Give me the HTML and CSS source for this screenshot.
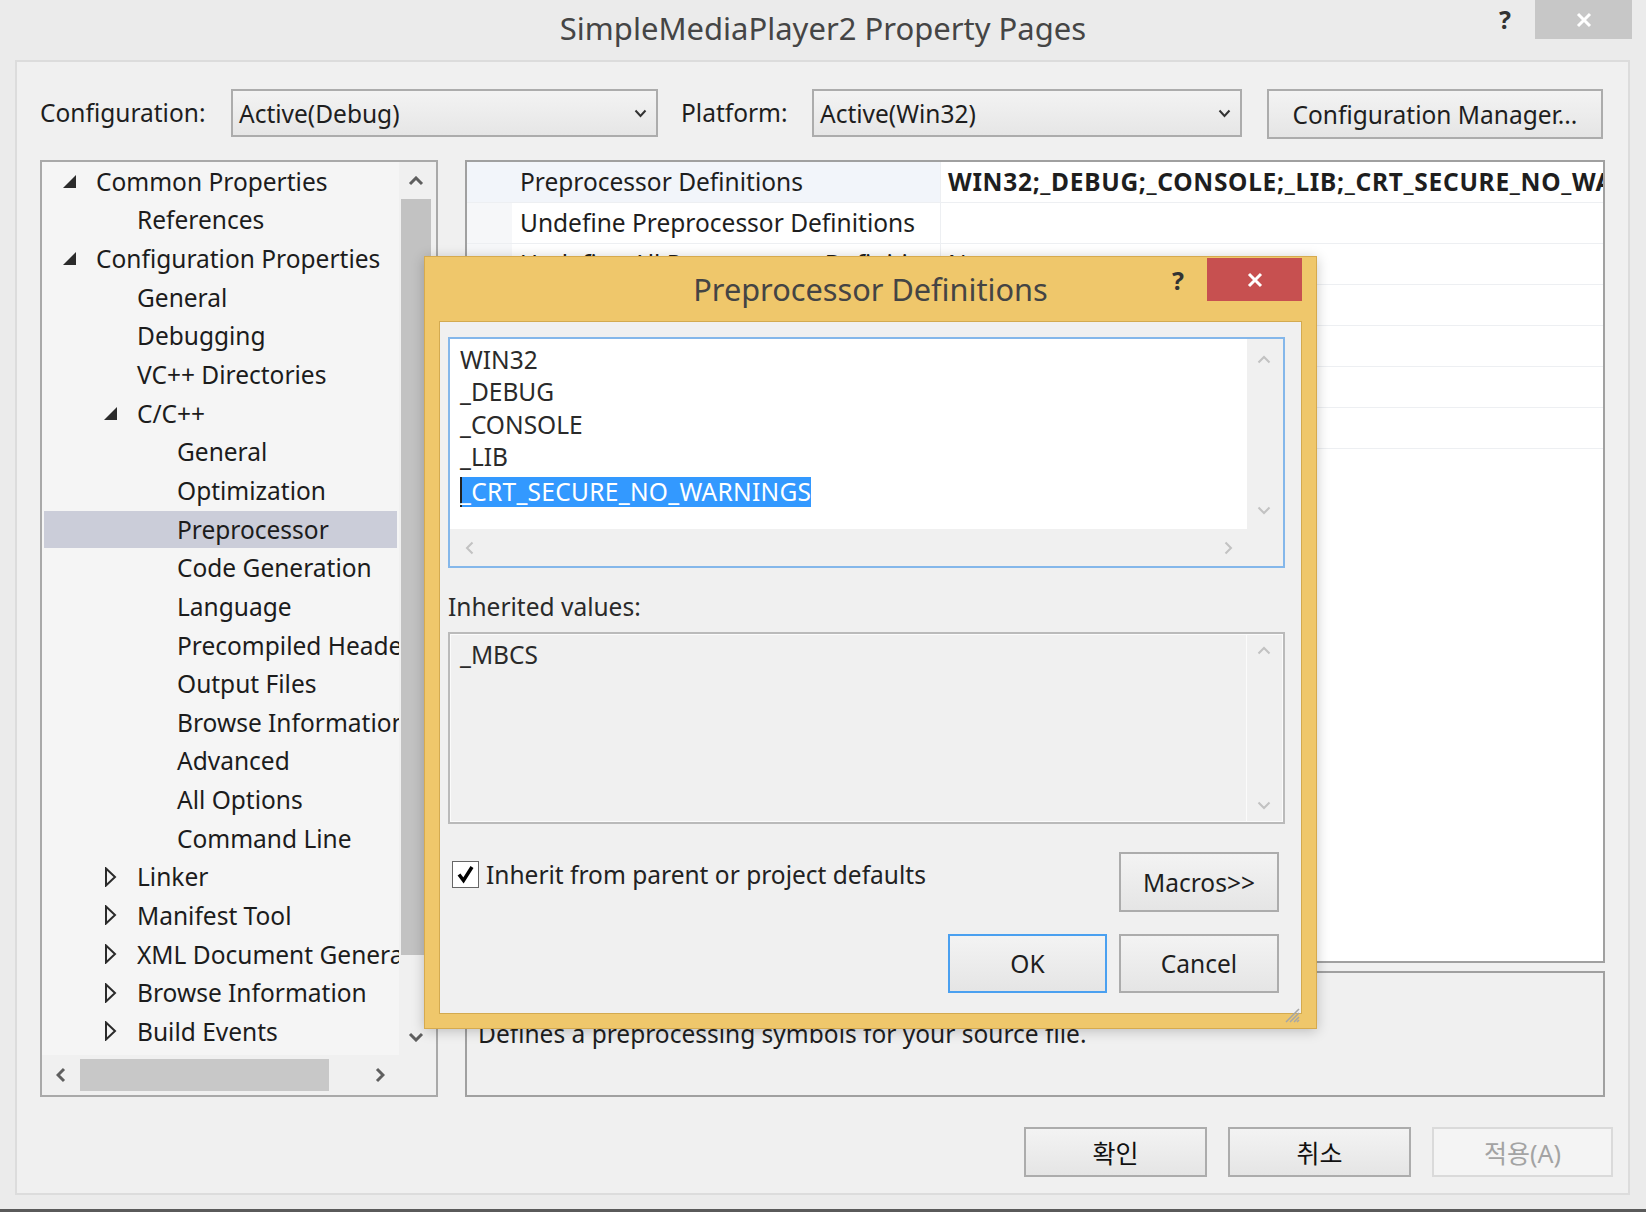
FILE: index.html
```html
<!DOCTYPE html>
<html lang="en">
<head>
<meta charset="utf-8">
<title>SimpleMediaPlayer2 Property Pages</title>
<link rel="stylesheet" href="styles.css">
</head>
<body>
<div class="window">
  <div class="titlebar">
    <div></div>
    <div class="title">SimpleMediaPlayer2 Property Pages</div>
    <div class="title-controls">
      <span class="help">?</span>
      <span class="close-btn gray"><svg width="16" height="16" viewBox="0 0 16 16"><path d="M2 2 L14 14 M14 2 L2 14" stroke="#fff" stroke-width="3" fill="none"/></svg></span>
    </div>
  </div>

  <div class="panel">
    <div class="config-row">
      <span class="lbl">Configuration:</span>
      <div class="combo combo-config"><span>Active(Debug)</span><svg width="13" height="9" viewBox="0 0 13 9"><polyline points="1.5,1.5 6.5,7 11.5,1.5" stroke="#333" stroke-width="2" fill="none"/></svg></div>
      <span class="lbl lbl-platform">Platform:</span>
      <div class="combo combo-platform"><span>Active(Win32)</span><svg width="13" height="9" viewBox="0 0 13 9"><polyline points="1.5,1.5 6.5,7 11.5,1.5" stroke="#333" stroke-width="2" fill="none"/></svg></div>
      <div class="btn btn-cfgmgr">Configuration Manager...</div>
    </div>

    <div class="main">
      <div class="tree">
        <div class="tree-body">
          <div class="tree-list">
            <div class="row l0"><span class="tw"><svg width="13" height="13" viewBox="0 0 13 13"><polygon points="13,0 13,13 0,13" fill="#2b2b2b"/></svg></span>Common Properties</div>
            <div class="row l1"><span class="tw"></span>References</div>
            <div class="row l0"><span class="tw"><svg width="13" height="13" viewBox="0 0 13 13"><polygon points="13,0 13,13 0,13" fill="#2b2b2b"/></svg></span>Configuration Properties</div>
            <div class="row l1"><span class="tw"></span>General</div>
            <div class="row l1"><span class="tw"></span>Debugging</div>
            <div class="row l1"><span class="tw"></span>VC++ Directories</div>
            <div class="row l1"><span class="tw"><svg width="13" height="13" viewBox="0 0 13 13"><polygon points="13,0 13,13 0,13" fill="#2b2b2b"/></svg></span>C/C++</div>
            <div class="row l2"><span class="tw"></span>General</div>
            <div class="row l2"><span class="tw"></span>Optimization</div>
            <div class="row l2 sel"><span class="tw"></span>Preprocessor</div>
            <div class="row l2"><span class="tw"></span>Code Generation</div>
            <div class="row l2"><span class="tw"></span>Language</div>
            <div class="row l2"><span class="tw"></span>Precompiled Headers</div>
            <div class="row l2"><span class="tw"></span>Output Files</div>
            <div class="row l2"><span class="tw"></span>Browse Information</div>
            <div class="row l2"><span class="tw"></span>Advanced</div>
            <div class="row l2"><span class="tw"></span>All Options</div>
            <div class="row l2"><span class="tw"></span>Command Line</div>
            <div class="row l1"><span class="tw"><svg width="13" height="20" viewBox="0 0 13 20"><polygon points="2,1.5 11,10 2,18.5" stroke="#2b2b2b" stroke-width="2" fill="none"/></svg></span>Linker</div>
            <div class="row l1"><span class="tw"><svg width="13" height="20" viewBox="0 0 13 20"><polygon points="2,1.5 11,10 2,18.5" stroke="#2b2b2b" stroke-width="2" fill="none"/></svg></span>Manifest Tool</div>
            <div class="row l1"><span class="tw"><svg width="13" height="20" viewBox="0 0 13 20"><polygon points="2,1.5 11,10 2,18.5" stroke="#2b2b2b" stroke-width="2" fill="none"/></svg></span>XML Document Generator</div>
            <div class="row l1"><span class="tw"><svg width="13" height="20" viewBox="0 0 13 20"><polygon points="2,1.5 11,10 2,18.5" stroke="#2b2b2b" stroke-width="2" fill="none"/></svg></span>Browse Information</div>
            <div class="row l1"><span class="tw"><svg width="13" height="20" viewBox="0 0 13 20"><polygon points="2,1.5 11,10 2,18.5" stroke="#2b2b2b" stroke-width="2" fill="none"/></svg></span>Build Events</div>
          </div>
          <div class="vscroll">
            <div class="sb-arrow"><svg width="16" height="10" viewBox="0 0 16 10"><polyline points="2,8 8,2 14,8" stroke="#5f5f5f" stroke-width="3" fill="none"/></svg></div>
            <div class="vthumb"></div>
            <div class="sb-fill"></div>
            <div class="sb-arrow"><svg width="16" height="10" viewBox="0 0 16 10"><polyline points="2,2 8,8 14,2" stroke="#5f5f5f" stroke-width="3" fill="none"/></svg></div>
          </div>
        </div>
        <div class="tree-bottom">
          <div class="hscroll">
            <div class="hb-arrow"><svg width="10" height="16" viewBox="0 0 10 16"><polyline points="8,2 2,8 8,14" stroke="#5f5f5f" stroke-width="3" fill="none"/></svg></div>
            <div class="hthumb"></div>
            <div class="sb-fill"></div>
            <div class="hb-arrow"><svg width="10" height="16" viewBox="0 0 10 16"><polyline points="2,2 8,8 2,14" stroke="#5f5f5f" stroke-width="3" fill="none"/></svg></div>
          </div>
          <div class="corner"></div>
        </div>
      </div>

      <div class="right">
        <div class="grid">
          <div class="prow sel"><span class="gutter"></span><span class="pname">Preprocessor Definitions</span><span class="pval bold">WIN32;_DEBUG;_CONSOLE;_LIB;_CRT_SECURE_NO_WARNINGS;%(PreprocessorDefinitions)</span></div>
          <div class="prow"><span class="gutter"></span><span class="pname">Undefine Preprocessor Definitions</span><span class="pval"></span></div>
          <div class="prow"><span class="gutter"></span><span class="pname">Undefine All Preprocessor Definitions</span><span class="pval">No</span></div>
          <div class="prow"><span class="gutter"></span><span class="pname">Ignore Standard Include Paths</span><span class="pval">No</span></div>
          <div class="prow"><span class="gutter"></span><span class="pname">Preprocess to a File</span><span class="pval">No</span></div>
          <div class="prow"><span class="gutter"></span><span class="pname">Preprocess Suppress Line Numbers</span><span class="pval">No</span></div>
          <div class="prow"><span class="gutter"></span><span class="pname">Keep Comments</span><span class="pval">No</span></div>
        </div>
        <div class="desc">
          <div class="desc-title">Preprocessor Definitions</div>
          <div>Defines a preprocessing symbols for your source file.</div>
        </div>
      </div>
    </div>

    <div class="buttons">
      <div class="btn kbtn">확인</div>
      <div class="btn kbtn">취소</div>
      <div class="btn kbtn disabled">적용(A)</div>
    </div>
  </div>

  <div class="dlg">
    <div class="dlg-titlebar">
      <div></div>
      <div class="dlg-title">Preprocessor Definitions</div>
      <div class="dlg-controls">
        <span class="help dlg-help">?</span>
        <span class="dlg-close"><svg width="16" height="16" viewBox="0 0 16 16"><path d="M2 2 L14 14 M14 2 L2 14" stroke="#fff" stroke-width="3" fill="none"/></svg></span>
      </div>
    </div>
    <div class="client">
      <div class="listbox">
        <div class="lb-text">
          <div class="lb-line">WIN32</div>
          <div class="lb-line">_DEBUG</div>
          <div class="lb-line">_CONSOLE</div>
          <div class="lb-line">_LIB</div>
          <div class="lb-line"><span class="selected">_CRT_SECURE_NO_WARNINGS</span></div>
        </div>
        <div class="lb-vs">
          <svg width="14" height="9" viewBox="0 0 14 9"><polyline points="1.5,7.5 7,2 12.5,7.5" stroke="#c2c2c2" stroke-width="2" fill="none"/></svg>
          <svg width="14" height="9" viewBox="0 0 14 9"><polyline points="1.5,1.5 7,7 12.5,1.5" stroke="#c2c2c2" stroke-width="2" fill="none"/></svg>
        </div>
        <div class="lb-hs">
          <svg width="9" height="14" viewBox="0 0 9 14"><polyline points="7.5,1.5 2,7 7.5,12.5" stroke="#c2c2c2" stroke-width="2" fill="none"/></svg>
          <svg width="9" height="14" viewBox="0 0 9 14"><polyline points="1.5,1.5 7,7 1.5,12.5" stroke="#c2c2c2" stroke-width="2" fill="none"/></svg>
        </div>
        <div class="lb-corner"></div>
      </div>
      <div class="inh-label">Inherited values:</div>
      <div class="inhbox">
        <div class="inh-text">_MBCS</div>
        <div class="inh-vs">
          <svg width="14" height="9" viewBox="0 0 14 9"><polyline points="1.5,7.5 7,2 12.5,7.5" stroke="#c2c2c2" stroke-width="2" fill="none"/></svg>
          <svg width="14" height="9" viewBox="0 0 14 9"><polyline points="1.5,1.5 7,7 12.5,1.5" stroke="#c2c2c2" stroke-width="2" fill="none"/></svg>
        </div>
      </div>
      <div class="opt-row">
        <div class="chk-wrap">
          <span class="chk"><svg width="25" height="25" viewBox="0 0 25 25"><path d="M6 12.5 L10.5 18.5 L19 5" stroke="#000" stroke-width="3.5" fill="none"/></svg></span>
          <span class="chk-label">Inherit from parent or project defaults</span>
        </div>
        <div class="btn macros">Macros&gt;&gt;</div>
      </div>
      <div class="ok-row">
        <div class="btn dbtn ok">OK</div>
        <div class="btn dbtn cancel">Cancel</div>
      </div>
      <div class="grip"><svg width="16" height="16" viewBox="0 0 16 16"><path d="M15 2 L2 15 M15 6 L6 15 M15 10 L10 15 M15 13 L13 15" stroke="#a6a6a6" stroke-width="1.5" fill="none"/></svg></div>
    </div>
  </div>
</div>
</body>
</html>
```

FILE: styles.css
```css
* { box-sizing: border-box; margin: 0; padding: 0; }
html, body { width: 1646px; height: 1212px; overflow: hidden; }
body {
  background: #ebebeb;
  font-family: "Noto Sans", "Noto Sans CJK KR", sans-serif;
  font-size: 24.5px;
  color: #1e1e1e;
}
.window {
  position: relative;
  width: 1646px;
  height: 1212px;
  background: #ebebeb;
  border-bottom: 3px solid #5a5a5a;
}

/* title bar */
.titlebar {
  height: 60px;
  display: grid;
  grid-template-columns: 1fr auto 1fr;
  align-items: start;
}
.title {
  font-size: 31px;
  line-height: 56px;
  color: #454545;
  white-space: nowrap;
}
.title-controls {
  display: flex;
  justify-content: flex-end;
  align-items: flex-start;
  padding-right: 14px;
}
.help {
  font-weight: 700;
  font-size: 25px;
  line-height: 38px;
  color: #333;
  margin-right: 24px;
}
.close-btn {
  width: 97px;
  height: 39px;
  background: #c7c7c7;
  display: flex;
  align-items: center;
  justify-content: center;
}

/* main panel */
.panel {
  margin-left: 15px;
  width: 1615px;
  height: 1135px;
  border: 2px solid #dcdcdc;
  background: #f0f0f0;
  padding: 27px 15px 0 23px;
}
.config-row {
  display: flex;
  align-items: flex-start;
  height: 50px;
}
.lbl {
  width: 191px;
  line-height: 48px;
  white-space: nowrap;
}
.lbl-platform { width: 131px; margin-left: 23px; }
.combo {
  height: 48px;
  border: 2px solid #acacac;
  background: linear-gradient(#f3f3f3, #e6e6e6);
  display: flex;
  align-items: center;
  justify-content: space-between;
  padding: 0 9px 0 6px;
  white-space: nowrap;
}
.combo-config { width: 427px; }
.combo-platform { width: 430px; }
.btn {
  border: 2px solid #acacac;
  background: linear-gradient(#f3f3f3, #e5e5e5);
  display: flex;
  align-items: center;
  justify-content: center;
  white-space: nowrap;
}
.btn-cfgmgr { width: 336px; height: 50px; margin-left: 25px; }

.main {
  display: flex;
  gap: 27px;
  margin-top: 21px;
  height: 937px;
}

/* tree */
.tree {
  width: 398px;
  height: 937px;
  border: 2px solid #a9a9a9;
  background: #f0f0f0;
  display: flex;
  flex-direction: column;
}
.tree-body { display: flex; height: 893px; }
.tree-list {
  width: 357px;
  background: #f5f5f5;
  overflow: hidden;
}
.row {
  height: 38.65px;
  display: flex;
  align-items: center;
  white-space: nowrap;
  color: #1c1c1c;
}
.tw {
  width: 33px;
  flex: none;
  display: flex;
  align-items: center;
}
.row.l0 .tw { margin-left: 21px; }
.row.l1 .tw { margin-left: 62px; }
.row.l2 .tw { margin-left: 102px; }
.row.sel {
  background: linear-gradient(#cbcdd9, #cbcdd9) no-repeat 2px 1px / calc(100% - 4px) 38px;
}
.vscroll {
  width: 37px;
  display: flex;
  flex-direction: column;
  background: #f0f0f0;
}
.sb-arrow {
  height: 37px;
  display: flex;
  align-items: center;
  justify-content: center;
  padding-right: 3px;
}
.vthumb {
  height: 756px;
  width: 30px;
  margin-left: 2px;
  background: #c2c2c2;
}
.sb-fill { flex: 1; }
.tree-bottom { display: flex; height: 40px; }
.hscroll {
  width: 357px;
  display: flex;
  align-items: center;
  background: #f0f0f0;
}
.hb-arrow {
  width: 38px;
  display: flex;
  justify-content: center;
}
.hthumb {
  width: 249px;
  height: 32px;
  background: #c8c8c8;
}
.corner { flex: 1; background: #f0f0f0; }

/* property grid */
.right {
  width: 1140px;
  display: flex;
  flex-direction: column;
  gap: 8px;
}
.grid {
  height: 803px;
  border: 2px solid #a0a0a0;
  background: #fff;
  overflow: hidden;
}
.prow {
  display: flex;
  height: 41px;
  border-bottom: 1px solid #edeff2;
}
.gutter { width: 45px; flex: none; background: #f6f7f9; }
.pname {
  width: 428px;
  flex: none;
  padding-left: 8px;
  line-height: 40px;
  white-space: nowrap;
  overflow: hidden;
}
.prow.sel .gutter, .prow.sel .pname { background: #f2f5fa; }
.pval {
  flex: 1;
  padding-left: 7px;
  line-height: 40px;
  border-left: 1px solid #edeff2;
  white-space: nowrap;
  overflow: hidden;
}
.pval.bold { font-weight: 700; letter-spacing: 0.7px; }
.desc {
  height: 126px;
  border: 2px solid #a0a0a0;
  background: #f0f0f0;
  padding: 4px 11px;
  line-height: 38px;
}
.desc-title { font-weight: 700; }

.buttons {
  display: flex;
  justify-content: flex-end;
  gap: 21px;
  margin-top: 30px;
}
.kbtn { width: 183px; height: 50px; font-size: 25px; color: #111; }
.kbtn.disabled {
  width: 181px;
  border-color: #dadada;
  background: #f4f4f4;
  color: #a3a3a3;
}

/* dialog */
.dlg {
  position: absolute;
  left: 424px;
  top: 256px;
  width: 893px;
  height: 773px;
  background: #efc76b;
  border: 1px solid #d6aa4e;
  box-shadow: 0 2px 12px rgba(0, 0, 0, 0.22);
  display: flex;
  flex-direction: column;
  padding: 0 14px 14px;
}
.dlg-titlebar {
  height: 64px;
  display: grid;
  grid-template-columns: 1fr auto 1fr;
  align-items: start;
  margin: 0 -14px;
  padding: 0 14px;
}
.dlg-title {
  font-size: 30.7px;
  line-height: 64px;
  color: #444;
  white-space: nowrap;
}
.dlg-controls {
  display: flex;
  justify-content: flex-end;
  align-items: flex-start;
}
.dlg-help { line-height: 46px; margin-right: 23px; }
.dlg-close {
  width: 95px;
  height: 43px;
  margin-top: 1px;
  background: #c75050;
  display: flex;
  align-items: center;
  justify-content: center;
}
.client {
  flex: 1;
  border: 1px solid #d3aa50;
  background: #f0f0f0;
  padding: 15px 16px 0 8px;
  display: flex;
  flex-direction: column;
}
.listbox {
  height: 231px;
  border: 2px solid #84b7ea;
  background: #f0f0f0;
  display: grid;
  grid-template-columns: 797px 36px;
  grid-template-rows: 190px 37px;
}
.lb-text {
  background: #fff;
  padding: 5px 0 0 10px;
  color: #2a2a2a;
}
.lb-line {
  height: 32.3px;
  line-height: 32.3px;
  white-space: nowrap;
}
.selected {
  display: inline-block;
  height: 30px;
  line-height: 30px;
  vertical-align: middle;
  background: #3399ff;
  color: #fff;
  box-shadow: inset 2px 0 0 #222;
  letter-spacing: 0.3px;
}
.lb-vs, .inh-vs {
  display: flex;
  flex-direction: column;
  align-items: center;
  justify-content: space-between;
  padding: 16px 3px 14px 0;
}
.lb-hs {
  display: flex;
  align-items: center;
  justify-content: space-between;
  padding: 0 14px 0 15px;
}
.inh-label {
  margin-top: 22px;
  line-height: 34px;
  color: #2a2a2a;
}
.inhbox {
  margin-top: 8px;
  height: 192px;
  border: 2px solid #bababa;
  background: #f0f0f0;
  box-shadow: inset 0 0 0 1px #fbfbfb;
  display: grid;
  grid-template-columns: 1fr 37px;
}
.inh-text {
  padding: 5px 0 0 10px;
  line-height: 32px;
  color: #2a2a2a;
}
.inh-vs {
  border-left: 1px solid #fbfbfb;
  padding: 12px 3px 12px 0;
}
.opt-row {
  margin-top: 28px;
  height: 60px;
  display: flex;
  justify-content: space-between;
  align-items: flex-start;
}
.chk-wrap {
  display: flex;
  align-items: center;
  margin-top: 9px;
  margin-left: 4px;
}
.chk {
  width: 27px;
  height: 27px;
  border: 1px solid #666;
  background: #fff;
  display: flex;
  align-items: center;
  justify-content: center;
}
.chk-label { margin-left: 7px; line-height: 27px; color: #222; }
.macros { width: 160px; height: 60px; margin-right: 6px; }
.ok-row {
  margin-top: 22px;
  display: flex;
  justify-content: flex-end;
  gap: 12px;
  margin-right: 6px;
}
.dbtn { height: 59px; }
.ok { width: 159px; border-color: #4aa0f0; }
.cancel { width: 160px; }
.grip {
  align-self: flex-end;
  margin-top: 4px;
  margin-right: -15px;
  width: 16px;
  height: 16px;
}
```
